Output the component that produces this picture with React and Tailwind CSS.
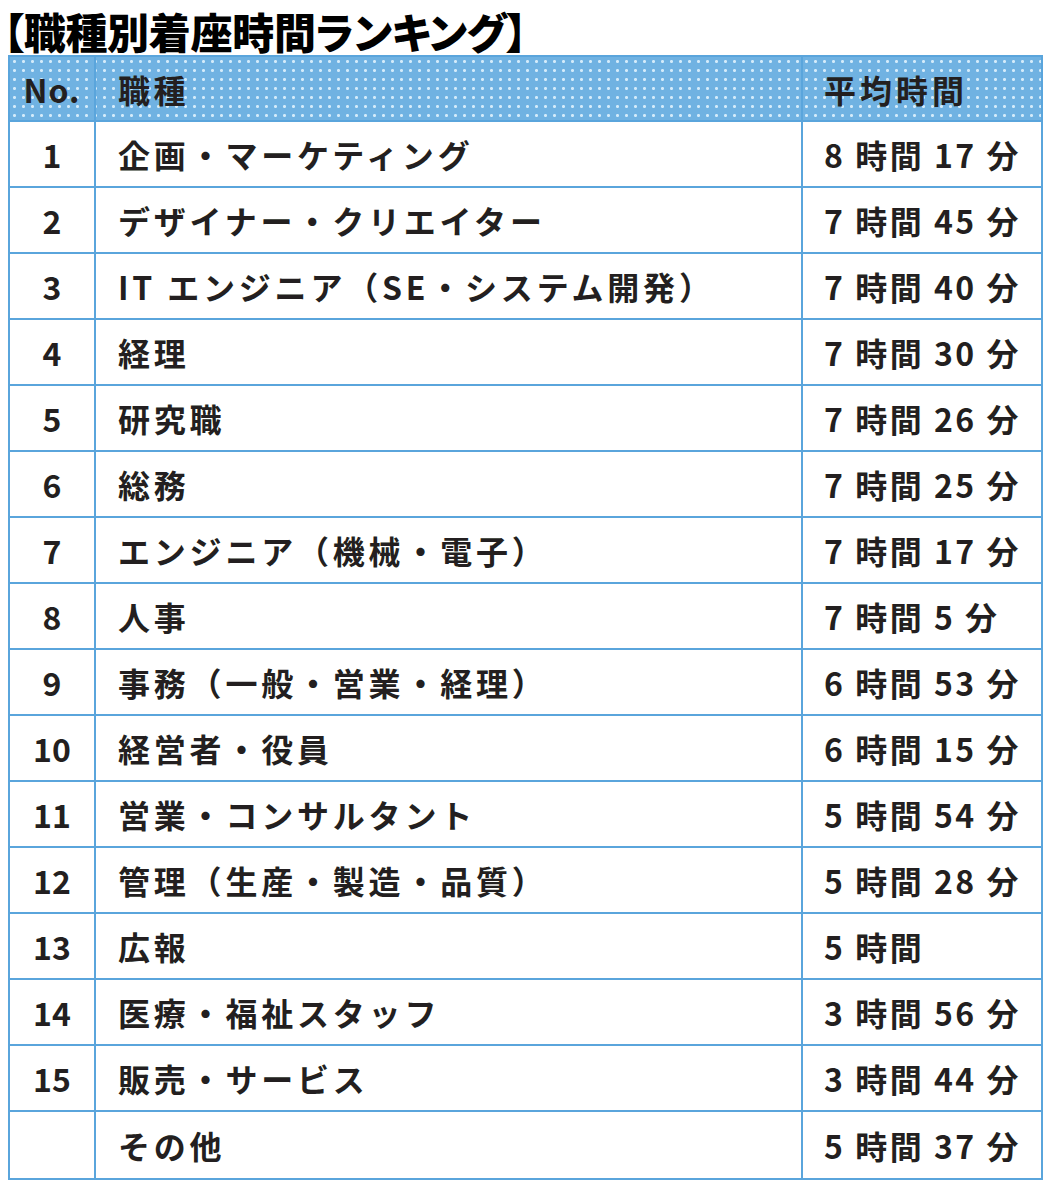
const rows = [
  ["1", "企画・マーケティング", "8 時間 17 分"],
  ["2", "デザイナー・クリエイター", "7 時間 45 分"],
  ["3", "IT エンジニア（SE・システム開発）", "7 時間 40 分"],
  ["4", "経理", "7 時間 30 分"],
  ["5", "研究職", "7 時間 26 分"],
  ["6", "総務", "7 時間 25 分"],
  ["7", "エンジニア（機械・電子）", "7 時間 17 分"],
  ["8", "人事", "7 時間 5 分"],
  ["9", "事務（一般・営業・経理）", "6 時間 53 分"],
  ["10", "経営者・役員", "6 時間 15 分"],
  ["11", "営業・コンサルタント", "5 時間 54 分"],
  ["12", "管理（生産・製造・品質）", "5 時間 28 分"],
  ["13", "広報", "5 時間"],
  ["14", "医療・福祉スタッフ", "3 時間 56 分"],
  ["15", "販売・サービス", "3 時間 44 分"],
  ["", "その他", "5 時間 37 分"],
];

function App() {
  return (
    <div
      className="w-[1052px] min-h-[1180px] bg-white text-[#231f20]"
      style={{ fontFamily: '"Noto Sans CJK JP", "Noto Sans", sans-serif' }}
    >
      {/* title */}
      <h1 className="pl-[3px] -mb-[6px] text-[42px] leading-[61px] font-black tracking-[-0.3px] text-black [font-feature-settings:'palt']">
        【職種別着座時間ランキング】
      </h1>

      {/* table */}
      <div className="ml-[8px] w-[1035px] border-2 border-[#5aa5dc]">
        <div className="grid grid-cols-[86px_707px_1fr] h-[65px] bg-[#70b2e2] bg-[radial-gradient(circle,#d4ebfa_1.2px,transparent_1.8px)] bg-[length:9px_9px] border-b-2 border-[#5aa5dc] text-[32px] font-bold">
          <div className="flex items-center justify-center border-r-2 border-[#5aa5dc] tracking-[1px]">No.</div>
          <div className="flex items-center pl-[22px] border-r-2 border-[#5aa5dc] tracking-[3.5px]">職種</div>
          <div className="flex items-center pl-[21px] tracking-[4px]">平均時間</div>
        </div>

        {rows.map((r, i) => (
          <div
            key={i}
            className={
              "grid grid-cols-[86px_707px_1fr] h-[66px] text-[32px] font-bold " +
              (i < rows.length - 1 ? "border-b-2 border-[#5aa5dc]" : "")
            }
          >
            <div className="flex items-center justify-center border-r-2 border-[#5aa5dc]">{r[0]}</div>
            <div className="flex items-center pl-[22px] border-r-2 border-[#5aa5dc] tracking-[3.8px] whitespace-nowrap">{r[1]}</div>
            <div className="flex items-center pl-[21px] tracking-[2.5px] whitespace-nowrap">{r[2]}</div>
          </div>
        ))}
      </div>
    </div>
  );
}

export default App;
